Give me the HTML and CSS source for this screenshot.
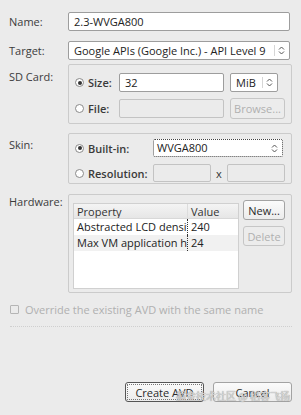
FILE: index.html
```html
<!DOCTYPE html>
<html>
<head lang="en">
    <meta charset="UTF-8">
    <title>Create AVD</title>
    <link rel="stylesheet" href="styles.css">
</head>
<body>
    <div id="dialog">
        <div class="row row-name">
            <span class="lbl">Name:</span>
            <div class="edit wide">2.3-WVGA800</div>
        </div>
        <div class="row row-target">
            <span class="lbl">Target:</span>
            <div class="combo wide">
                <span class="combo-txt">Google APIs (Google Inc.) - API Level 9</span>
                <span class="combo-btn"><svg width="7" height="9" viewBox="0 0 7 9"><path d="M1 3.5L3.5 1L6 3.5M1 5.5L3.5 8L6 5.5" fill="none" stroke="#555" stroke-width="1"/></svg></span>
            </div>
        </div>
        <div class="row row-sd">
            <span class="lbl">SD Card:</span>
            <div class="group sd-group">
                <div class="grow grow-size">
                    <span class="radio on"></span><span class="opt opt-size">Size:</span>
                    <div class="edit size-edit">32</div>
                    <div class="combo unit">
                        <span class="combo-txt">MiB</span>
                        <span class="combo-btn"><svg width="7" height="9" viewBox="0 0 7 9"><path d="M1 3.5L3.5 1L6 3.5M1 5.5L3.5 8L6 5.5" fill="none" stroke="#555" stroke-width="1"/></svg></span>
                    </div>
                </div>
                <div class="grow grow-file">
                    <span class="radio"></span><span class="opt opt-size">File:</span>
                    <div class="edit off size-edit"></div>
                    <div class="btn off browse">Browse...</div>
                </div>
            </div>
        </div>
        <div class="row row-skin">
            <span class="lbl">Skin:</span>
            <div class="group skin-group">
                <div class="grow grow-builtin">
                    <span class="radio on"></span><span class="opt opt-skin">Built-in:</span>
                    <div class="combo skin-combo">
                        <span class="combo-txt">WVGA800</span>
                        <span class="combo-btn plain"><svg width="7" height="9" viewBox="0 0 7 9"><path d="M1 3.5L3.5 1L6 3.5M1 5.5L3.5 8L6 5.5" fill="none" stroke="#555" stroke-width="1"/></svg></span>
                    </div>
                </div>
                <div class="grow grow-res">
                    <span class="radio"></span><span class="opt opt-skin">Resolution:</span>
                    <div class="edit off res-edit"></div>
                    <span class="times">x</span>
                    <div class="edit off res-edit"></div>
                </div>
            </div>
        </div>
        <div class="row row-hw">
            <span class="lbl">Hardware:</span>
            <div class="group hw-group">
                <div class="table">
                    <div class="tr th">
                        <span class="c1">Property</span><span class="c2">Value</span>
                    </div>
                    <div class="tr">
                        <span class="c1">Abstracted LCD density</span><span class="c2">240</span>
                    </div>
                    <div class="tr alt">
                        <span class="c1">Max VM application heap size</span><span class="c2">24</span>
                    </div>
                </div>
                <div class="side-btns">
                    <div class="btn small">New...</div>
                    <div class="btn small off">Delete</div>
                </div>
            </div>
        </div>
        <div class="override">
            <span class="check"></span>
            <span class="override-txt">Override the existing AVD with the same name</span>
        </div>
        <div class="sep"></div>
        <div class="bottom">
            <div class="btn big default">Create AVD</div>
            <div class="btn big">Cancel</div>
        </div>
        <div class="mark">掘金技术社区 @ 稻客飞扬</div>
    </div>
</body>
</html>
```

FILE: styles.css
```css
*{
    margin: 0;
    padding: 0;
    box-sizing: border-box;
}
html,body{
    width: 301px;
    height: 415px;
    background: #ebebeb;
    overflow: hidden;
}
body{
    font-family: "Open Sans", "DejaVu Sans", sans-serif;
    font-size: 11px;
    color: #3c3c3c;
}
#dialog{
    position: relative;
    height: 415px;
    padding: 12px 9px 0 9px;
}
.row{
    display: flex;
    align-items: flex-start;
}
.lbl{
    width: 59px;
    flex: none;
    line-height: 19px;
}
.wide{
    width: 222px;
}
.row-target{
    margin-top: 10px;
}
.row-sd{
    margin-top: 4px;
}
.row-sd .lbl{
    padding-top: 3px;
}
.row-skin{
    margin-top: 9px;
}
.row-skin .lbl{
    padding-top: 2px;
}
.row-hw{
    margin-top: 10px;
}
.row-hw .lbl{
    margin-top: -2px;
}
.edit{
    height: 19px;
    line-height: 17px;
    padding: 0 5px;
    background: #fff;
    border: 1px solid #9d9d9d;
    border-radius: 2px;
    color: #222;
}
.edit.off{
    background: #ebebeb;
    border-color: #c3c3c3;
}
.combo{
    display: flex;
    height: 19px;
    background: #fff;
    border: 1px solid #9d9d9d;
    border-radius: 2px;
    color: #222;
}
.combo-txt{
    flex: 1;
    line-height: 17px;
    padding-left: 5px;
    white-space: nowrap;
    overflow: hidden;
}
.combo-btn{
    width: 14px;
    display: flex;
    align-items: center;
    justify-content: center;
    border-left: 1px solid #d6d6d6;
    margin: 3px 1px 3px 0;
}
.combo-btn.plain{
    border-left: none;
}
.group{
    width: 224px;
    border: 1px solid #cbcbcb;
    border-radius: 2px;
}
.sd-group{
    height: 60px;
    padding: 8px 0 0 6px;
}
.grow{
    display: flex;
    align-items: center;
}
.grow-file{
    margin-top: 6px;
}
.radio{
    width: 9px;
    height: 9px;
    flex: none;
    border: 1px solid #8a8a8a;
    border-radius: 50%;
    background: #fff;
    position: relative;
}
.radio.on::after{
    content: "";
    position: absolute;
    left: 1.5px;
    top: 1.5px;
    width: 4px;
    height: 4px;
    border-radius: 50%;
    background: #333;
}
.opt{
    font-weight: 600;
    padding-left: 4px;
    color: #3a3a3a;
}
.opt-size{
    width: 35px;
}
.size-edit{
    width: 105px;
}
.unit{
    width: 48px;
    margin-left: 6px;
}
.browse{
    width: 55px;
    height: 21px;
    margin-left: 6px;
}
.btn{
    display: flex;
    align-items: center;
    justify-content: center;
    background: linear-gradient(#fbfbfb, #ececec);
    border: 1px solid #a3a3a3;
    border-radius: 3px;
    color: #2a2a2a;
}
.btn.off{
    color: #b0b0b0;
    border-color: #c6c6c6;
    background: #ececec;
}
.skin-group{
    height: 51px;
    padding: 5px 0 0 6px;
}
.opt-skin{
    width: 69px;
}
.skin-combo{
    width: 130px;
    height: 18px;
    border: 1px dotted #444;
}
.skin-combo .combo-txt{
    line-height: 16px;
    padding-left: 3px;
}
.grow-res{
    margin-top: 7px;
}
.res-edit{
    width: 58px;
    height: 18px;
}
.times{
    width: 16px;
    text-align: center;
    color: #333;
}
.hw-group{
    height: 99px;
    display: flex;
    align-items: flex-start;
    padding: 8px 0 0 4px;
    width: 225px;
}
.table{
    width: 166px;
    height: 86px;
    background: #fff;
    border: 1px solid #d0d0d0;
    margin-top: 0;
}
.tr{
    display: flex;
    height: 16px;
    line-height: 16px;
    color: #222;
}
.tr.th{
    height: 15px;
    line-height: 15px;
    background: linear-gradient(#f4f4f4, #e6e6e6);
    border-bottom: 1px solid #d8d8d8;
    color: #333;
}
.tr.alt{
    background: #f1f1f1;
}
.c1{
    width: 114px;
    padding-left: 3px;
    white-space: nowrap;
    overflow: hidden;
    border-right: 1px dotted #333;
}
.th .c1{
    border-right: 1px solid #dcdcdc;
}
.c2{
    padding-left: 3px;
}
.side-btns{
    margin-left: 4px;
    margin-top: -3px;
    display: flex;
    flex-direction: column;
    gap: 6px;
}
.btn.small{
    width: 42px;
    height: 20px;
}
.override{
    display: flex;
    align-items: center;
    margin-top: 9px;
    padding-left: 1px;
}
.check{
    width: 9px;
    height: 9px;
    border: 1px solid #b5b5b5;
    border-radius: 1px;
}
.override-txt{
    padding-left: 6px;
    color: #b0b0b0;
}
.sep{
    margin-top: 9px;
    margin-left: 1px;
    height: 1px;
    border-top: 1px dotted #cfcfcf;
}
.bottom{
    display: flex;
    justify-content: flex-end;
    gap: 9px;
    margin-top: 55px;
}
.btn.big{
    width: 79px;
    height: 20px;
}
.btn.default{
    border: 1px solid #555;
    outline: 1px dotted #777;
    outline-offset: -3px;
}
.mark{
    position: absolute;
    left: 176px;
    top: 388px;
    font-family: "Noto Sans CJK SC", sans-serif;
    font-size: 10px;
    color: #d8d8d8;
    text-shadow: 0 0 1px #777;
    white-space: nowrap;
}
```
